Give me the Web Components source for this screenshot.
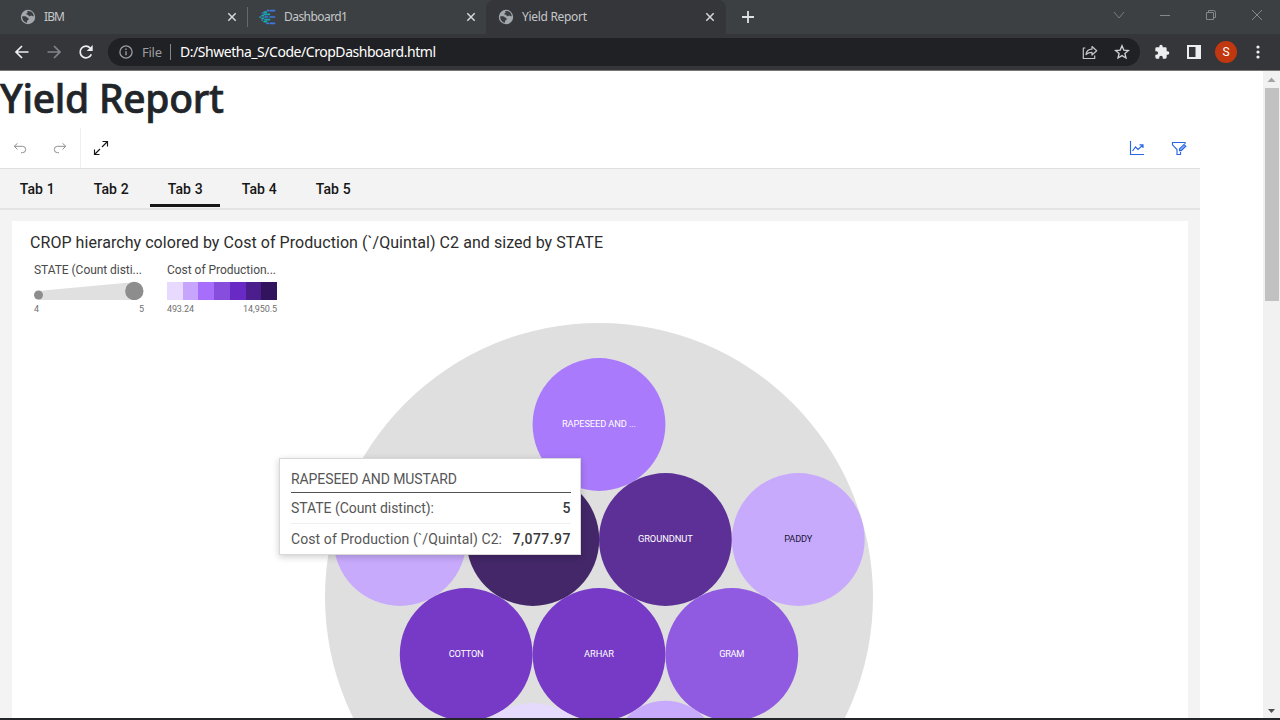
<!DOCTYPE html>
<html lang="en">
<head>
<meta charset="utf-8">
<title>Yield Report</title>
<style>
html,body{margin:0;height:720px;overflow:hidden;background:#fff}
body{font-family:"Noto Sans","Open Sans",sans-serif}
</style>
</head>
<body>
<browser-window></browser-window>
<script>
const define = (name, html, ready) => customElements.define(name, class extends HTMLElement {
  connectedCallback() {
    if (this.shadowRoot) return;
    const t = document.createElement('template');
    t.innerHTML = typeof html === 'function' ? html(this) : html;
    this.attachShadow({mode: 'open'}).append(t.content.cloneNode(true));
    if (ready) ready(this);
  }
});

/* Text run tracked so that it occupies exactly the width given in "w". */
define('fit-text', el => `<style>:host{display:block;white-space:nowrap;flex:none;width:${el.getAttribute('w')}px}span{display:inline-block}</style><span>${el.getAttribute('text')}</span>`, el => {
  const s = el.shadowRoot.querySelector('span');
  const n = el.getAttribute('text').length;
  s.style.letterSpacing = ((+el.getAttribute('w') - s.getBoundingClientRect().width) / (n - 1)) + 'px';
});

const icons = {
  globe: ['0 0 16 16', '<circle cx="8" cy="8" r="7.2" fill="#a3a8ad"/><path d="M7 2.2c2-.5 4.300.3 5.400 1.600.8 1 1.300 2.300 1.300 3.500-1.200.2-1.500-.9-2.600-.8-.8.1-.9 1-1.800.8-.9-.2-.6-1.300-1.500-1.500-.8-.2-1.700 0-1.600-.8.1-.9 1.300-.7 1.500-1.500zM2.200 7.200l3 .1c1.300.1 1.500 1.200 2.500 1.500.9.3 1.200 1 .9 1.700-.4.8-1.500.6-1.500 1.500l-.1 1.700C4.200 13.300 2 10.700 2.200 7.200z" fill="#3b3e41"/>'],
  close: ['0 0 10 10', '<path d="M1.300 1.300l7.400 7.400M8.700 1.300L1.300 8.700" stroke="#d5d7d9" stroke-width="1.500"/>'],
  dash: ['0 0 17 16', '<g stroke-width="1.700" stroke-linecap="round" fill="none"><path d="M8.500 1.600h1.200M11.500 1.600h4M5 5.300h1.500M11 8h4.500M6 8h2.500M8 14.300h1.500M11.500 14.300h4M3.500 4h.2M3 11h.2" stroke="#3d7be0"/><path d="M5.200 3.200h2M6 5.300h4.500M3 6.700h1.400M1 8h.3M3 9.300h1.500M6 10.700h4.500M5 12.600h2.500" stroke="#16a9b0"/></g>'],
  plus: ['0 0 14 14', '<path d="M7 1v12M1 7h12" stroke="#dfe1e3" stroke-width="1.800"/>'],
  chev: ['0 0 12 12', '<path d="M1 3l5 6 5-6" fill="none" stroke="#797d80"/>'],
  min: ['0 0 12 12', '<path d="M1 6.500h10" stroke="#84888b"/>'],
  max: ['0 0 12 12', '<path d="M1.500 3.500h7v7h-7zM3.500 3.500v-2h5q2 0 2 2v5h-2" fill="none" stroke="#84888b"/>'],
  x: ['0 0 12 12', '<path d="M1 1l10 10M11 1L1 11" stroke="#84888b"/>'],
  back: ['0 0 16 16', '<path d="M14.500 8H2.500M8 2L2 8l6 6" fill="none" stroke="#eceef0" stroke-width="1.700"/>'],
  forward: ['0 0 16 16', '<path d="M1.500 8h12M8 2l6 6-6 6" fill="none" stroke="#818488" stroke-width="1.700"/>'],
  reload: ['0 0 16 16', '<path d="M13.300 10.300A5.800 5.800 0 1 1 12.200 4" fill="none" stroke="#eceef0" stroke-width="1.700"/><path d="M14.700 1v6H8.700z" fill="#eceef0"/>'],
  info: ['0 0 14 14', '<circle cx="7" cy="7" r="6.100" fill="none" stroke="#9a9da1" stroke-width="1.300"/><path d="M7 6.200v4M7 3.500v1.500" stroke="#9a9da1" stroke-width="1.400"/>'],
  share: ['0 0 16 16', '<path d="M3.300 4H1.300v10.500h11.400v-3M4 10.500C4.500 7 7 5.300 10 5.200V2.500l4.700 4.300-4.700 4.200V8.400C7.500 8.400 5.500 9 4 10.500z" fill="none" stroke="#c3c6c9" stroke-width="1.200" stroke-linejoin="round"/>'],
  star: ['0 0 16 16', '<path d="M8 1.800l1.800 4.300 4.600.4-3.500 3 1.100 4.500L8 11.600 4 14l1.100-4.500-3.500-3 4.600-.4z" fill="none" stroke="#d0d2d4" stroke-width="1.300"/>'],
  puzzle: ['0 0 24 24', '<path fill="#eceef0" d="M20.500 11H19V7a2 2 0 0 0-2-2h-4V3.500a2.500 2.500 0 0 0-5 0V5H4a2 2 0 0 0-2 2v3.800h1.500a2.700 2.700 0 0 1 0 5.400H2V20a2 2 0 0 0 2 2h3.800v-1.500a2.700 2.700 0 0 1 5.400 0V22H17a2 2 0 0 0 2-2v-4h1.500a2.500 2.500 0 0 0 0-5z"/>'],
  side: ['0 0 14 14', '<path fill="#eceef0" fill-rule="evenodd" d="M0 0h14v14H0zM2 2v10h6.500V2z"/>'],
  dots: ['0 0 4 14', '<g fill="#eceef0"><circle cx="2" cy="2" r="1.600"/><circle cx="2" cy="7" r="1.600"/><circle cx="2" cy="12" r="1.600"/></g>'],
  undo: ['0 0 14 12', '<path d="M4.500 1.300L1.200 4.300l3.300 3M1.200 4.300h8.300a3.200 3.200 0 0 1 0 6.400H8" fill="none" stroke="#8f8f8f"/>'],
  redo: ['0 0 14 12', '<path d="M9.500 1.300l3.300 3-3.300 3M12.800 4.300H4.500a3.200 3.200 0 0 0 0 6.400H6" fill="none" stroke="#8f8f8f"/>'],
  expand: ['0 0 16 16', '<path d="M9.500 1.500h5v5M14.500 1.500L9 7M6.500 14.500h-5v-5M1.500 14.500L7 9" fill="none" stroke="#161616" stroke-width="1.150"/>'],
  chart: ['0 0 16 16', '<path d="M1.500 1v13.500H15M3.500 11l3-4 2.500 2.500L14 5M10.500 4.800H14V8" fill="none" stroke="#2b66e5" stroke-width="1.150"/>'],
  filter: ['0 0 16 16', '<path d="M11.500 2.500h-10v2.300L6 9.500v5h3.500V12M11.500 2.500h2.500v1.500" fill="none" stroke="#2b66e5" stroke-width="1.150"/><path d="M8.500 8.800L13 4.400l1.800 1.800-4.500 4.400H8.500z" fill="#8bb0fa" stroke="#2b66e5" stroke-width="1.100"/>'],
};
define('ui-icon', el => {
  const [box, body] = icons[el.getAttribute('name')];
  const [,, w, h] = box.split(' ');
  const s = +(el.getAttribute('size') || w);
  return `<style>:host{display:block;flex:none;width:${s}px;height:${s * h / w}px}svg{display:block;width:100%;height:100%}</style><svg viewBox="${box}">${body}</svg>`;
});

define('browser-tab', el => `<style>
:host{display:flex;align-items:center;box-sizing:border-box;width:240px;height:34px;padding:0 13px 0 20px;font-size:12px;color:#c5c8ca;line-height:16px}
:host([active]){background:#35363a;border-radius:8px 8px 0 0}
fit-text{margin-left:8px}.grow{flex:1}
</style><ui-icon name="${el.getAttribute('icon')}"></ui-icon><fit-text w="${el.getAttribute('w')}" text="${el.getAttribute('label')}"></fit-text><div class="grow"></div><ui-icon name="close" size="10"></ui-icon>`);

define('tab-strip', `<style>
:host{display:flex;align-items:center;height:34px;background:#3c4043}
i{width:1px;height:20px;background:#65696c;margin:0 -1px 0 0}
.plus{margin-left:15px}.controls{margin-left:auto;display:flex;align-items:center;gap:34px;padding:0 17px 5px 0}
</style>
<browser-tab style="width:247px;padding-right:10px" icon="globe" label="IBM" w="21"></browser-tab><i></i>
<browser-tab style="width:239px;padding-left:12px;padding-right:10px" icon="dash" label="Dashboard1" w="64"></browser-tab>
<browser-tab active style="padding-left:12px;padding-right:11px" icon="globe" label="Yield Report" w="65"></browser-tab>
<ui-icon class="plus" name="plus"></ui-icon>
<div class="controls"><ui-icon name="chev"></ui-icon><ui-icon name="min"></ui-icon><ui-icon name="max"></ui-icon><ui-icon name="x"></ui-icon></div>`);

define('address-bar', `<style>
:host{display:flex;align-items:center;box-sizing:border-box;height:36px;padding:0 20px 0 14px;background:#35363a;font-size:14px;line-height:20px}
.nav{display:flex;gap:16px;width:94px}
.pill{display:flex;align-items:center;box-sizing:border-box;width:1032px;height:28px;border-radius:14px;background:#202124;padding:0 10px 0 11px;color:#9a9da1}
.pill fit-text:first-of-type{margin-left:9px}
i{width:1px;height:16px;background:#85888b;margin:0 9px 0 8px}
.url{color:#fff}.grow{flex:1}.pill .star{margin-left:16px}
.actions{display:flex;align-items:center;margin-left:14px}
.avatar{width:22px;height:22px;border-radius:50%;background:#c1370f;color:#fff;font:12px/22px Roboto,sans-serif;text-align:center;margin:0 19px 0 14px}
</style>
<div class="nav"><ui-icon name="back"></ui-icon><ui-icon name="forward"></ui-icon><ui-icon name="reload"></ui-icon></div>
<div class="pill"><ui-icon name="info"></ui-icon><fit-text w="20" text="File" style="font-size:13px"></fit-text><i></i><fit-text class="url" w="256" text="D:/Shwetha_S/Code/CropDashboard.html"></fit-text><div class="grow"></div><ui-icon name="share"></ui-icon><ui-icon class="star" name="star"></ui-icon></div>
<div class="actions"><ui-icon name="puzzle" size="16"></ui-icon><ui-icon name="side" style="margin-left:17px"></ui-icon><div class="avatar">S</div><ui-icon name="dots"></ui-icon></div>`);

define('dash-toolbar', `<style>
:host{display:flex;align-items:center;height:40px;border-bottom:1px solid #e0e0e0;background:#fff}
.group{display:flex;align-items:center;box-sizing:border-box;height:40px;width:81px;gap:26px;padding-left:13px;border-right:1px solid #f0f0f0}
.right{display:flex;margin-left:auto;gap:26px;padding-right:13px}
.ex{margin-left:12px}ui-icon{margin-bottom:1px}
</style><div class="group"><ui-icon name="undo"></ui-icon><ui-icon name="redo"></ui-icon></div><ui-icon class="ex" name="expand"></ui-icon>
<div class="right"><ui-icon name="chart"></ui-icon><ui-icon name="filter"></ui-icon></div>`);

define('dash-tabs', `<style>
:host{display:flex;gap:4px;height:39px;padding-left:2px;background:#f3f3f3;border-bottom:2px solid #e3e3e3}
div{box-sizing:border-box;width:70px;height:38px;padding:11px 0 0 17.700px;font:500 14px/18px Roboto,sans-serif;color:#161616}
.on{border-bottom:3px solid #161616}
</style>${[1,2,3,4,5].map(n => `<div class="${n === 3 ? 'on' : ''}"><fit-text w="35" text="Tab ${n}"></fit-text></div>`).join('')}`);

define('chart-legend', `<style>
:host{display:flex;gap:24px;padding:7px 0 0 22px;font:12px/20px Roboto,sans-serif;color:#4a4a4a}
.item{width:109px}svg{display:block;height:20px;width:110px}.ramp{display:flex;height:18px;margin-top:2px;width:110px}.ramp b{flex:1}
.ends{display:flex;justify-content:space-between;font-size:9px;line-height:14px;color:#6f6f6f;margin-top:2px;width:110px}
</style>
<div class="item"><fit-text w="108" text="STATE (Count disti..."></fit-text><svg viewBox="0 0 110 20"><path d="M4 11L101 2v18H4z" fill="#e0e0e0"/><circle cx="4.500" cy="15" r="4.500" fill="#8d8d8d"/><circle cx="100.300" cy="11" r="9.200" fill="#8d8d8d"/></svg><div class="ends"><span>4</span><span>5</span></div></div>
<div class="item"><fit-text w="109" text="Cost of Production..."></fit-text><div class="ramp">${['#e8daff','#c8a5fc','#a66efa','#874ddd','#6929c4','#4b1d8d','#31135e'].map(c => `<b style="background:${c}"></b>`).join('')}</div><div class="ends"><fit-text w="27" text="493.24"></fit-text><fit-text w="34" text="14,950.5"></fit-text></div></div>`);

const bubbles = [
  [599, 424.5, 66.4, '#a97afb', 'RAPESEED AND ...', 74, '#fff'],
  [400, 539.5, 66.4, '#c8aafd'], [532.8, 539.5, 66.4, '#432768'],
  [665.4, 539.5, 66.4, '#5d3097', 'GROUNDNUT', 55, '#fff'],
  [798.3, 539.5, 66.4, '#c8aafd', 'PADDY', 28, '#21153a'],
  [466.2, 654.5, 66.4, '#763ac6', 'COTTON', 35, '#fff'],
  [599, 654.5, 66.4, '#763ac6', 'ARHAR', 30, '#fff'],
  [731.8, 654.5, 66.4, '#915be1', 'GRAM', 25, '#fff'],
  [532.6, 769.5, 66.4, '#e5dafb'], [665.4, 753.7, 53, '#c8aafd'],
];
define('bubble-chart', `<style>:host{display:block}svg{display:block;width:1176px;height:405px}text{font:9.300px Roboto,sans-serif;text-anchor:middle}</style>
<svg viewBox="12 313 1176 405"><circle cx="599" cy="597" r="274" fill="#dfdfdf"/>${bubbles.map(([x, y, r, c, t, w, f]) => `<circle cx="${x}" cy="${y}" r="${r}" fill="${c}"/>` + (t ? `<text x="${x}" y="${y + 2.5}" fill="${f}" textLength="${w}">${t}</text>` : '')).join('')}</svg>`);

define('data-tooltip', `<style>
:host{display:block;position:absolute;left:267px;top:237px;box-sizing:border-box;width:302px;height:97px;background:#fff;border:1px solid #d8d8d8;box-shadow:0 2px 7px rgba(0,0,0,.2);padding:5px 9.500px 0 11px;font:14px/20px Roboto,sans-serif;color:#565656}
div{display:flex;justify-content:space-between;box-sizing:border-box;height:31px;padding-top:5px;border-bottom:1px solid #f0f0f0}
.head{height:29px;border-color:#525252}
b{font-weight:500;color:#393939}.last{border:0}
</style><div class="head"><fit-text w="166" text="RAPESEED AND MUSTARD"></fit-text></div>
<div><fit-text w="143" text="STATE (Count distinct):"></fit-text><b>5</b></div>
<div class="last"><fit-text w="211" text="Cost of Production (\`/Quintal) C2:"></fit-text><b><fit-text w="58" text="7,077.97"></fit-text></b></div>`);

define('chart-panel', `<style>
:host{display:block;position:relative;margin:11px 12px 0;height:497px;background:#fff;overflow:hidden}
h2{margin:0;padding:12px 0 0 18px;font:400 16px/20px Roboto,sans-serif;color:#2c2c2c}
chart-legend{height:53px}
</style><h2><fit-text w="573" text="CROP hierarchy colored by Cost of Production (\`/Quintal) C2 and sized by STATE"></fit-text></h2>
<chart-legend></chart-legend><bubble-chart></bubble-chart><data-tooltip></data-tooltip>`);

define('page-scrollbar', `<style>
:host{display:flex;flex-direction:column;align-items:center;width:17px;background:#f1f1f1}
svg{display:block;width:17px;height:17px}i{width:14px;height:213px;background:#c1c1c1}.down{margin-top:auto;margin-bottom:-2px}
</style><svg><path d="M4.500 11h8l-4-4.500z" fill="#a3a3a3"/></svg><i></i><svg class="down"><path d="M5 6h7l-3.500 4z" fill="#505050"/></svg>`);

define('yield-page', `<style>
:host{display:flex;height:647px;background:#fff}
main{flex:1}h1{margin:0;box-sizing:border-box;height:57px;font:500 39px/52px "Noto Sans","Open Sans",sans-serif;color:#212529;padding-top:1px;-webkit-text-stroke:.7px #212529}
section{width:1200px;height:590px;background:#f3f3f3}
</style><main><h1><fit-text w="224" text="Yield Report"></fit-text></h1><section><dash-toolbar></dash-toolbar><dash-tabs></dash-tabs><chart-panel></chart-panel></section></main><page-scrollbar></page-scrollbar>`);

define('browser-window', `<style>
:host{display:block;box-sizing:border-box;width:1280px;height:720px;overflow:hidden;border-bottom:2px solid #242528}
.line{height:1px;background:#777}
</style><tab-strip></tab-strip><address-bar></address-bar><div class="line"></div><yield-page></yield-page>`);
</script>
</body>
</html>
